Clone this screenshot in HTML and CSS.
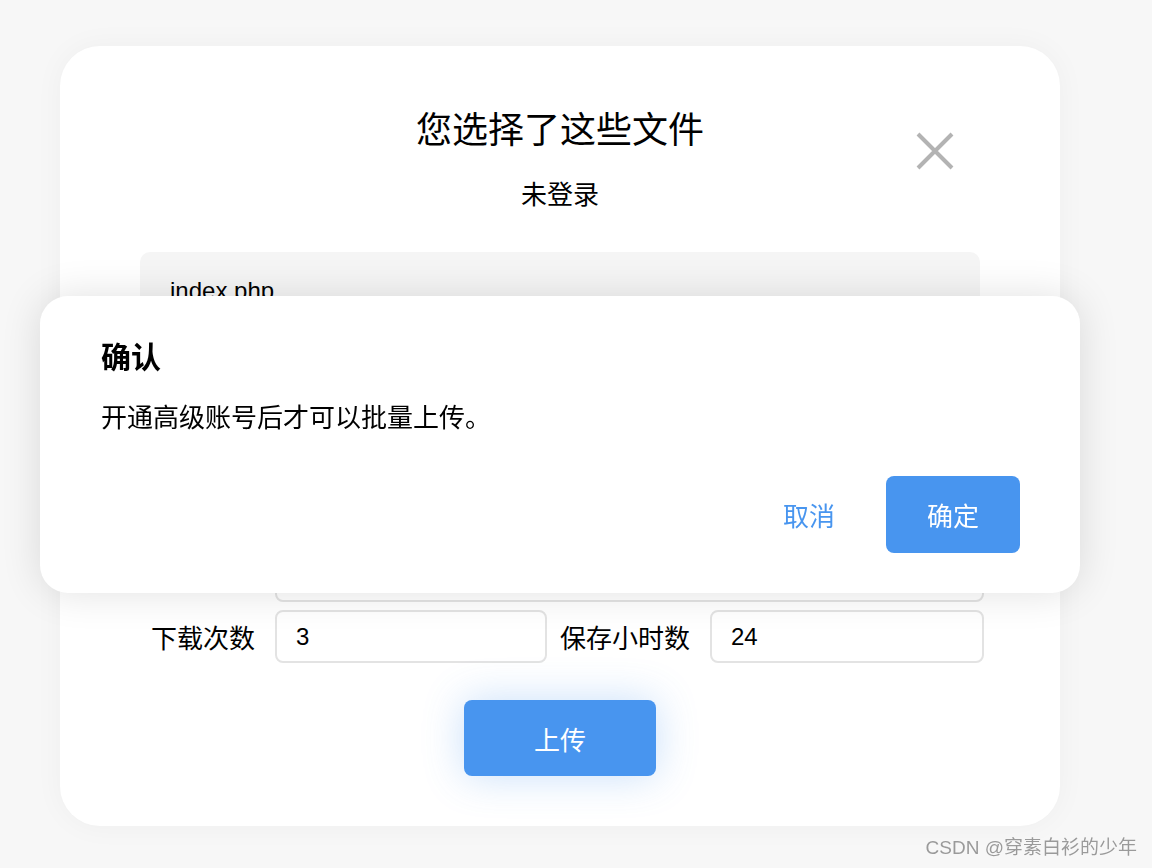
FILE: index.html
```html
<!DOCTYPE html>
<html lang="zh-CN">
<head>
    <meta charset="UTF-8">
    <meta name="viewport" content="width=device-width, initial-scale=1.0">
    <title>上传文件</title>
    <link rel="stylesheet" href="styles.css">
</head>
<body>
    <div class="card">
        <button class="close-btn" aria-label="关闭">
            <svg width="40" height="40" viewBox="0 0 40 40">
                <path d="M3 3 L37 37 M37 3 L3 37" stroke="#b3b3b3" stroke-width="4" fill="none"/>
            </svg>
        </button>
        <h1 class="title">您选择了这些文件</h1>
        <div class="subtitle">未登录</div>

        <ul class="file-list">
            <li>index.php</li>
        </ul>

        <div class="form-row">
            <span class="form-label"></span>
            <input class="form-input wide" type="text" value="">
        </div>
        <div class="form-row">
            <label class="form-label">下载次数</label>
            <input class="form-input" type="text" value="3">
            <label class="form-label">保存小时数</label>
            <input class="form-input" type="text" value="24">
        </div>

        <div class="actions">
            <button class="upload-btn">上传</button>
        </div>
    </div>

    <div class="dialog">
        <h3 class="dialog-title">确认</h3>
        <p class="dialog-msg">开通高级账号后才可以批量上传。</p>
        <div class="dialog-actions">
            <button class="btn-cancel">取消</button>
            <button class="btn-ok">确定</button>
        </div>
    </div>

    <div class="watermark">CSDN @穿素白衫的少年</div>
</body>
</html>
```

FILE: styles.css
```css
body {
    margin: 0;
    padding: 46px 0 0 60px;
    background-color: #f7f7f7;
    font-family: "Liberation Sans", "Noto Sans CJK SC", sans-serif;
    color: #000;
    height: 868px;
    box-sizing: border-box;
    overflow: hidden;
}
.card {
    position: relative;
    width: 1000px;
    box-sizing: border-box;
    background-color: #fff;
    border-radius: 40px;
    padding: 60px 80px 50px;
    box-shadow: 0 0 30px rgba(0, 0, 0, 0.04);
}
.close-btn {
    position: absolute;
    top: 85px;
    right: 105px;
    padding: 0;
    border: none;
    background: none;
    cursor: pointer;
}
.close-btn svg {
    display: block;
}
.title {
    margin: 0;
    text-align: center;
    font-size: 36px;
    font-weight: normal;
    line-height: 50px;
}
.subtitle {
    margin-top: 21px;
    text-align: center;
    font-size: 26px;
    line-height: 36px;
}
.file-list {
    list-style: none;
    margin: 39px 0 0;
    padding: 20px 30px;
    min-height: 228px;
    background-color: #f5f5f5;
    border-radius: 10px;
}
.file-list li {
    font-size: 24px;
    line-height: 38px;
}
.form-row {
    display: grid;
    grid-template-columns: 135px 272px 163px 274px;
    align-items: center;
    width: 844px;
    margin-top: 8px;
}
.file-list + .form-row {
    margin-top: 29px;
}
.form-label {
    text-align: right;
    padding-right: 20px;
    font-size: 26px;
    white-space: nowrap;
}
.form-input {
    height: 53px;
    box-sizing: border-box;
    border: 2px solid #e3e3e3;
    border-radius: 8px;
    padding: 0 19px;
    font-family: "Liberation Sans", sans-serif;
    font-size: 24px;
    color: #000;
    width: 100%;
    outline: none;
}
.form-input.wide {
    grid-column: 2 / 5;
}
.actions {
    margin-top: 37px;
    text-align: center;
}
.upload-btn {
    width: 192px;
    height: 76px;
    border: none;
    border-radius: 8px;
    background-color: #4895ef;
    color: #fff;
    font-family: "Liberation Sans", "Noto Sans CJK SC", sans-serif;
    font-size: 26px;
    box-shadow: 0 0 40px rgba(72, 149, 239, 0.3);
    cursor: pointer;
}
.dialog {
    position: fixed;
    left: 40px;
    top: 296px;
    width: 1040px;
    box-sizing: border-box;
    padding: 42px 60px 40px 61px;
    background-color: #fff;
    border-radius: 28px;
    box-shadow: 0 0 40px rgba(0, 0, 0, 0.12);
}
.dialog-title {
    margin: 0;
    font-size: 30px;
    font-weight: bold;
    line-height: 40px;
}
.dialog-msg {
    margin: 22px 0 0;
    font-size: 26px;
    line-height: 36px;
}
.dialog-actions {
    margin-top: 40px;
    display: flex;
    justify-content: flex-end;
    gap: 10px;
}
.btn-cancel, .btn-ok {
    width: 134px;
    height: 77px;
    border: none;
    border-radius: 8px;
    font-family: "Liberation Sans", "Noto Sans CJK SC", sans-serif;
    font-size: 26px;
    cursor: pointer;
}
.btn-cancel {
    background: none;
    color: #4895ef;
}
.btn-ok {
    background-color: #4895ef;
    color: #fff;
}
.watermark {
    position: fixed;
    right: 15px;
    bottom: 8px;
    font-size: 19px;
    line-height: 24px;
    color: #9a9a9a;
    text-shadow: 0 0 1px rgba(255, 255, 255, 0.8);
}
```
